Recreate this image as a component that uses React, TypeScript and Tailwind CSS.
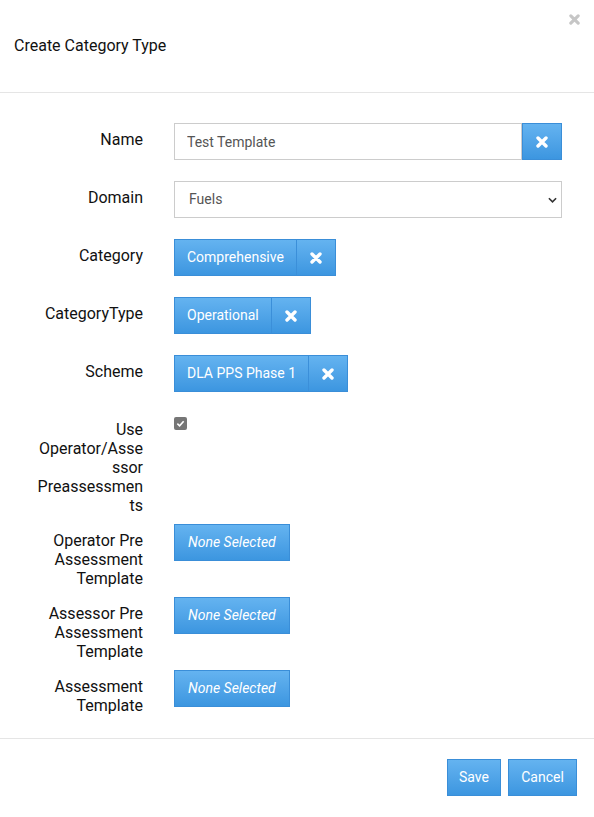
import React, { useState } from "react";

const TimesIcon = ({ className = "" }: { className?: string }) => (
  <svg viewBox="0 0 12 12" className={className} aria-hidden="true">
    <path
      d="M2 2 L10 10 M10 2 L2 10"
      stroke="currentColor"
      strokeWidth="3.4"
      strokeLinecap="round"
      fill="none"
    />
  </svg>
);

const btn =
  "h-[37px] border border-[#3a8ed8] bg-gradient-to-b from-[#64b3f0] to-[#3c96e0] text-white text-[14px] font-normal";

// Blue split button: value on the left, clear on the right
const Chip = ({ label }: { label: string }) => (
  <div className="flex">
    <button className={`${btn} px-[12px] border-r-0`}>{label}</button>
    <button className={`${btn} w-[40px] flex items-center justify-center border-l-[#3b8fd9]`}>
      <TimesIcon className="w-[12px] h-[12px]" />
    </button>
  </div>
);

const NoneSelected = () => (
  <button className={`${btn} px-[13px] italic`}>None Selected</button>
);

const Row = ({
  label,
  mb,
  children,
}: {
  label: string;
  mb: string;
  children: React.ReactNode;
}) => (
  <div className={`flex items-start ${mb}`}>
    <label className="w-[107px] ml-[36px] pt-[7px] text-right text-[16px] leading-[19px] text-[#111] break-words">
      {label}
    </label>
    <div className="ml-[31px] flex-1">{children}</div>
  </div>
);

const App = () => {
  const [name, setName] = useState("Test Template");
  const [domain, setDomain] = useState("Fuels");

  return (
    <div
      className="w-[594px] h-[817px] bg-white flex flex-col"
      style={{ fontFamily: "Roboto, 'Liberation Sans', sans-serif" }}
    >
      {/* header */}
      <div className="relative h-[93px] border-b border-[#e5e5e5] px-[14px] pt-[34px]">
        <h4 className="text-[16px] leading-[24px] text-[#111]">Create Category Type</h4>
        <button className="absolute top-[14px] right-[14px] text-[#c6c6c6]">
          <TimesIcon className="w-[11px] h-[11px]" />
        </button>
      </div>

      {/* body */}
      <div className="pt-[30px] pb-[23px] pr-[32px]">
        <Row label="Name" mb="mb-[21px]">
          <div className="flex">
            <input
              value={name}
              onChange={(e) => setName(e.target.value)}
              className="flex-1 h-[37px] border border-[#cccccc] px-[12px] text-[14px] text-[#555] outline-none"
            />
            <button className={`${btn} w-[40px] flex items-center justify-center`}>
              <TimesIcon className="w-[12px] h-[12px]" />
            </button>
          </div>
        </Row>

        <Row label="Domain" mb="mb-[21px]">
          <div className="relative">
            <select
              value={domain}
              onChange={(e) => setDomain(e.target.value)}
              className="w-full h-[37px] appearance-none border border-[#cccccc] bg-white px-[14px] text-[14px] text-[#555] outline-none"
            >
              <option>Fuels</option>
              <option>Power</option>
            </select>
            <svg
              viewBox="0 0 10 6"
              className="pointer-events-none absolute right-[5px] top-[16px] w-[9px] h-[6px] text-[#333]"
            >
              <path d="M1 1 L5 5 L9 1" stroke="currentColor" strokeWidth="1.8" fill="none" />
            </svg>
          </div>
        </Row>

        <Row label="Category" mb="mb-[21px]">
          <Chip label="Comprehensive" />
        </Row>

        <Row label="CategoryType" mb="mb-[21px]">
          <Chip label="Operational" />
        </Row>

        <Row label="Scheme" mb="mb-[21px]">
          <Chip label="DLA PPS Phase 1" />
        </Row>

        <Row label="Use Operator/Assessor Preassessments" mb="mb-[9px]">
          <span className="mt-[4px] flex items-center justify-center w-[13px] h-[13px] rounded-[2px] bg-[#767676]">
            <svg viewBox="0 0 10 10" className="w-[9px] h-[9px]">
              <path d="M1.5 5.2 L4 7.5 L8.5 2.5" stroke="white" strokeWidth="1.8" fill="none" />
            </svg>
          </span>
        </Row>

        <Row label="Operator Pre Assessment Template" mb="mb-[9px]">
          <NoneSelected />
        </Row>

        <Row label="Assessor Pre Assessment Template" mb="mb-[9px]">
          <NoneSelected />
        </Row>

        <Row label="Assessment Template" mb="mb-0">
          <NoneSelected />
        </Row>
      </div>

      {/* footer */}
      <div className="border-t border-[#e5e5e5] flex justify-end gap-[7px] pt-[20px] pr-[17px]">
        <button className={`${btn} w-[54px]`}>Save</button>
        <button className={`${btn} w-[69px]`}>Cancel</button>
      </div>
    </div>
  );
};

export default App;
